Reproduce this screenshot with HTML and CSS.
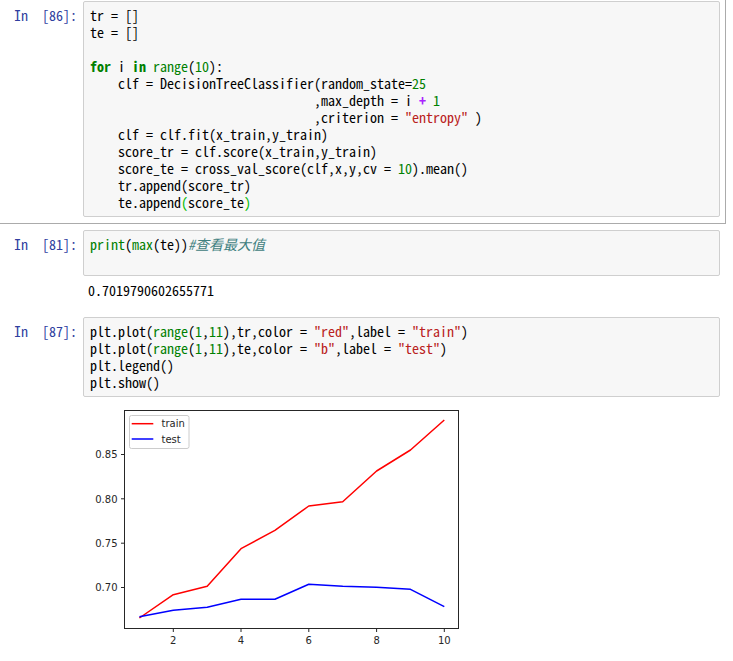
FILE: index.html
```html
<!DOCTYPE html>
<html>
<head>
<meta charset="utf-8">
<link rel="stylesheet" href="styles.css">
</head>
<body>
<div class="notebook">
  <div class="cell selected">
    <div class="prompt">In  [86]:</div>
    <div class="inner">
      <pre class="input">tr = []
te = []

<span class="k">for</span> i <span class="k">in</span> <span class="nb">range</span>(<span class="mi">10</span>):
    clf = DecisionTreeClassifier(random_state=<span class="mi">25</span>
                                ,max_depth = i <span class="o">+</span> <span class="mi">1</span>
                                ,criterion = <span class="s">"entropy"</span> )
    clf = clf.fit(x_train,y_train)
    score_tr = clf.score(x_train,y_train)
    score_te = cross_val_score(clf,x,y,cv = <span class="mi">10</span>).mean()
    tr.append(score_tr)
    te.append<span class="mb">(</span>score_te<span class="mb">)</span></pre>
    </div>
  </div>

  <div class="cell">
    <div class="prompt">In  [81]:</div>
    <div class="inner">
      <pre class="input"><span class="nb">print</span>(<span class="nb">max</span>(te))<span class="c">#查看最大值</span>
 </pre>
      <pre class="output">0.7019790602655771</pre>
    </div>
  </div>

  <div class="cell">
    <div class="prompt">In  [87]:</div>
    <div class="inner">
      <pre class="input">plt.plot(<span class="nb">range</span>(<span class="mi">1</span>,<span class="mi">11</span>),tr,color = <span class="s">"red"</span>,label = <span class="s">"train"</span>)
plt.plot(<span class="nb">range</span>(<span class="mi">1</span>,<span class="mi">11</span>),te,color = <span class="s">"b"</span>,label = <span class="s">"test"</span>)
plt.legend()
plt.show()</pre>
      <div class="figure">
        <svg class="plot" width="380" height="258" viewBox="88 403 380 258" xmlns="http://www.w3.org/2000/svg">
          <rect x="88" y="403" width="380" height="258" fill="#ffffff"/>
          <rect x="124.5" y="410.5" width="334" height="218" fill="none" stroke="#262626" stroke-width="1"/>
          <g stroke="#262626" stroke-width="1">
            <line x1="121" y1="454.5" x2="124.5" y2="454.5"/>
            <line x1="121" y1="498.8" x2="124.5" y2="498.8"/>
            <line x1="121" y1="543.2" x2="124.5" y2="543.2"/>
            <line x1="121" y1="587.5" x2="124.5" y2="587.5"/>
            <line x1="173.3" y1="628.5" x2="173.3" y2="632"/>
            <line x1="241" y1="628.5" x2="241" y2="632"/>
            <line x1="308.8" y1="628.5" x2="308.8" y2="632"/>
            <line x1="376.6" y1="628.5" x2="376.6" y2="632"/>
            <line x1="444.3" y1="628.5" x2="444.3" y2="632"/>
          </g>
          <g class="tick" text-anchor="end">
            <text x="117.5" y="458.2">0.85</text>
            <text x="117.5" y="502.5">0.80</text>
            <text x="117.5" y="546.9">0.75</text>
            <text x="117.5" y="591.2">0.70</text>
          </g>
          <g class="tick" text-anchor="middle">
            <text x="173.3" y="643.5">2</text>
            <text x="241" y="643.5">4</text>
            <text x="308.8" y="643.5">6</text>
            <text x="376.6" y="643.5">8</text>
            <text x="444.3" y="643.5">10</text>
          </g>
          <polyline fill="none" stroke="#ff0000" stroke-width="1.5" stroke-linejoin="round" points="139.4,618 173.3,594.7 207.2,586.3 241,548.7 274.9,530.3 308.8,506 342.7,501.7 376.6,471 410.5,450 444.3,420"/>
          <polyline fill="none" stroke="#0000ff" stroke-width="1.5" stroke-linejoin="round" points="139.4,616.7 173.3,610.3 207.2,607.3 241,599.3 274.9,599.3 308.8,584.3 342.7,586.3 376.6,587.3 410.5,589.3 444.3,606.7"/>
          <rect x="129.5" y="415.5" width="59.5" height="33" rx="2" ry="2" fill="#ffffff" fill-opacity="0.8" stroke="#cccccc" stroke-width="1"/>
          <line x1="131.7" y1="423.7" x2="153.3" y2="423.7" stroke="#ff0000" stroke-width="1.5"/>
          <line x1="131.7" y1="439" x2="153.3" y2="439" stroke="#0000ff" stroke-width="1.5"/>
          <text class="tick" x="161.5" y="427.3">train</text>
          <text class="tick" x="161.5" y="442.6">test</text>
        </svg>
      </div>
    </div>
  </div>
</div>
</body>
</html>
```

FILE: styles.css
```css
html, body {
  margin: 0;
  padding: 0;
  background: #ffffff;
  overflow: hidden;
}

body {
  width: 733px;
  height: 661px;
  font-family: "Noto Sans Mono CJK SC", "Noto Sans CJK SC", "Liberation Mono", monospace;
  font-size: 14px;
  color: #000000;
}

.notebook {
  margin-top: -5px;
  margin-left: -1px;
  margin-right: 7px;
}

.cell {
  display: flex;
  border: 1px solid transparent;
  padding: 5px 5px 6px 5px;
}

.cell.selected {
  border-color: #ababab;
}

.prompt {
  width: 72px;
  flex: none;
  padding-top: 6px;
  padding-right: 6px;
  text-align: right;
  white-space: pre;
  line-height: 17px;
  color: #303f9f;
}

.inner {
  flex: 1;
  min-width: 0;
}

pre {
  margin: 0;
  font-family: inherit;
  font-size: 14px;
  line-height: 17px;
}

.input {
  background: #f7f7f7;
  border: 1px solid #cfcfcf;
  border-radius: 2px;
  padding: 5px 6px;
}

.output {
  padding: 6px 5px 5px 5px;
}

.figure {
  padding: 6px 0 0 5px;
  line-height: 0;
}

.plot {
  display: block;
}

.tick {
  font-family: "DejaVu Sans", sans-serif;
  font-size: 10px;
  fill: #262626;
}

.k { color: #008000; font-weight: bold; }
.nb { color: #008000; }
.mi { color: #008000; }
.o { color: #aa22ff; font-weight: bold; }
.s { color: #ba2121; }
.c { color: #408080; font-style: italic; }
.mb { color: #00bb00; }
```
